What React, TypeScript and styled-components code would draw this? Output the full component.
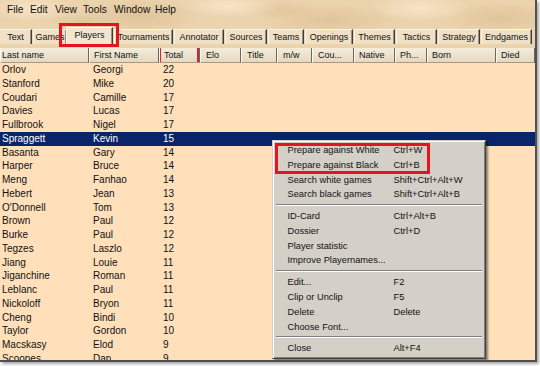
import React from 'react';
import styled, { createGlobalStyle } from 'styled-components';

const Global = createGlobalStyle`
  html, body { margin: 0; padding: 0; background: #ffffff; }
  body { width: 540px; height: 366px; overflow: hidden; font-family: "Liberation Sans", Arial, sans-serif; }
  #root { width: 540px; height: 366px; }
`;

const COLS = '89px 70px 41px 41px 36px 35px 42px 41px 32px 69px 39px';

const Window = styled.div`
  position: relative;
  box-sizing: border-box;
  width: 537px;
  height: 362px;
  border-right: 2px solid #505050;
  border-bottom: 2px solid #505050;
  box-shadow: 2px 2px 3px rgba(0, 0, 0, 0.35);
  background: #ffe0bb;
  display: flex;
  flex-direction: column;
  overflow: hidden;
`;

const TopArea = styled.div`
  height: 48px;
  flex: none;
  display: flex;
  flex-direction: column;
  background-color: #ebd3ad;
  background-image:
    radial-gradient(ellipse 40px 14px at 30px 8px, rgba(250, 232, 205, 0.8), transparent),
    radial-gradient(ellipse 60px 18px at 140px 16px, rgba(214, 182, 138, 0.55), transparent),
    radial-gradient(ellipse 50px 12px at 230px 6px, rgba(250, 232, 205, 0.8), transparent),
    radial-gradient(ellipse 70px 16px at 330px 20px, rgba(214, 182, 138, 0.5), transparent),
    radial-gradient(ellipse 50px 14px at 420px 8px, rgba(250, 232, 205, 0.75), transparent),
    radial-gradient(ellipse 60px 16px at 500px 18px, rgba(214, 182, 138, 0.5), transparent),
    radial-gradient(ellipse 30px 10px at 80px 22px, rgba(214, 182, 138, 0.45), transparent),
    radial-gradient(ellipse 40px 10px at 280px 10px, rgba(214, 182, 138, 0.4), transparent);
`;

const MenuBar = styled.div`
  height: 19px;
  display: flex;
  align-items: center;
  padding-left: 7px;
  font-size: 10.2px;
  color: #111;
`;

const MenuBarItem = styled.span<{ $w: number }>`
  width: ${p => p.$w}px;
`;

const TabStrip = styled.div`
  margin-top: 8px;
  height: 18px;
  display: flex;
  align-items: flex-start;
`;

const Tab = styled.div<{ $w: number; $active?: boolean }>`
  box-sizing: border-box;
  width: ${p => p.$w}px;
  height: ${p => (p.$active ? 18 : 15)}px;
  margin-top: ${p => (p.$active ? 0 : 2)}px;
  margin-left: ${p => (p.$active ? -1 : 1)}px;
  background: ${p => (p.$active ? '#f3e6d0' : '#efe0c6')};
  border-top: 1px solid #fbf4ea;
  border-left: 1px solid #fbf4ea;
  border-right: 1px solid #3c3c3c;
  box-shadow: inset -1px 0 0 #9a9080;
  font-size: 9px;
  color: #111;
  display: flex;
  align-items: center;
  justify-content: center;
  padding-bottom: ${p => (p.$active ? 3 : 0)}px;
  white-space: nowrap;
  z-index: ${p => (p.$active ? 2 : 1)};
  &:first-child { margin-left: 0; border-left: none; }
`;

const HeaderRow = styled.div`
  display: grid;
  grid-template-columns: ${COLS};
  height: 15px;
  flex: none;
`;

const HeaderCell = styled.div<{ $pad: number; $sorted?: boolean }>`
  position: relative;
  box-sizing: border-box;
  padding-left: ${p => p.$pad}px;
  background: linear-gradient(#f4ecdc, #e6d8bf);
  border-left: 1px solid #fffaf0;
  border-right: 1px solid #6e6658;
  border-bottom: 1px solid #a69a84;
  font-size: 9px;
  line-height: 14px;
  color: #111;
  white-space: nowrap;
  overflow: hidden;
  ${p =>
    p.$sorted
      ? `box-shadow: inset 1px 0 0 #e0202a, inset -2px 0 0 #e0202a;`
      : ''}
`;

const Body = styled.div`
  flex: 1;
  background: #ffe0bb;
`;

const Row = styled.div<{ $selected?: boolean }>`
  display: grid;
  grid-template-columns: ${COLS};
  height: 13.75px;
  align-items: center;
  background: ${p => (p.$selected ? '#0a246a' : 'transparent')};
  color: ${p => (p.$selected ? '#ffffff' : '#111')};
  font-size: 10px;
`;

const Cell = styled.div<{ $pad: number }>`
  padding-left: ${p => p.$pad}px;
  white-space: nowrap;
  line-height: 13.75px;
`;

const RedBox = styled.div<{ $l: number; $t: number; $w: number; $h: number }>`
  position: absolute;
  left: ${p => p.$l}px;
  top: ${p => p.$t}px;
  width: ${p => p.$w}px;
  height: ${p => p.$h}px;
  box-sizing: border-box;
  border: 3px solid #e3151d;
  z-index: 10;
  pointer-events: none;
`;

const Popup = styled.div`
  position: absolute;
  left: 272px;
  top: 140px;
  width: 214px;
  box-sizing: border-box;
  background: #d4d0c8;
  border-top: 1px solid #d4d0c8;
  border-left: 1px solid #d4d0c8;
  border-right: 1px solid #404040;
  border-bottom: 1px solid #404040;
  box-shadow: inset 1px 1px 0 #ffffff, inset -1px -1px 0 #808080, 2px 2px 2px rgba(0, 0, 0, 0.45);
  padding: 2px 2px 2px 2px;
  z-index: 5;
  font-size: 9.3px;
  color: #111;
`;

const MenuItem = styled.div`
  display: grid;
  grid-template-columns: 106px 1fr;
  height: 14.7px;
  align-items: center;
  padding-left: 12.5px;
  white-space: nowrap;
`;

const Separator = styled.div`
  height: 7.3px;
  display: flex;
  flex-direction: column;
  justify-content: center;
  padding: 0 1px;
  &::before { content: ''; display: block; height: 1px; background: #808080; }
  &::after { content: ''; display: block; height: 1px; background: #ffffff; }
`;

const menuBar: [string, number][] = [
  ['File', 23], ['Edit', 25], ['View', 28], ['Tools', 31], ['Window', 41], ['Help', 30],
];

const tabs: [string, number, boolean?][] = [
  ['Text', 32], ['Games', 34], ['Players', 47, true], ['Tournaments', 59], ['Annotator', 50],
  ['Sources', 42], ['Teams', 36], ['Openings', 48], ['Themes', 41], ['Tactics', 41],
  ['Strategy', 42], ['Endgames', 51],
];

const headers: [string, number, boolean?][] = [
  ['Last name', 1], ['First Name', 4], ['Total', 4, true], ['Elo', 5], ['Title', 5],
  ['m/w', 5], ['Cou...', 5], ['Native', 4], ['Ph...', 4], ['Born', 4], ['Died', 4],
];

const players: [string, string, number][] = [
  ['Orlov', 'Georgi', 22], ['Stanford', 'Mike', 20], ['Coudari', 'Camille', 17],
  ['Davies', 'Lucas', 17], ['Fullbrook', 'Nigel', 17], ['Spraggett', 'Kevin', 15],
  ['Basanta', 'Gary', 14], ['Harper', 'Bruce', 14], ['Meng', 'Fanhao', 14],
  ['Hebert', 'Jean', 13], ["O'Donnell", 'Tom', 13], ['Brown', 'Paul', 12],
  ['Burke', 'Paul', 12], ['Tegzes', 'Laszlo', 12], ['Jiang', 'Louie', 11],
  ['Jiganchine', 'Roman', 11], ['Leblanc', 'Paul', 11], ['Nickoloff', 'Bryon', 11],
  ['Cheng', 'Bindi', 10], ['Taylor', 'Gordon', 10], ['Macskasy', 'Elod', 9],
  ['Scoopes', 'Dan', 9],
];

type MenuEntry = [string, string] | 'sep';
const menu: MenuEntry[] = [
  ['Prepare against White', 'Ctrl+W'],
  ['Prepare against Black', 'Ctrl+B'],
  ['Search white games', 'Shift+Ctrl+Alt+W'],
  ['Search black games', 'Shift+Ctrl+Alt+B'],
  'sep',
  ['ID-Card', 'Ctrl+Alt+B'],
  ['Dossier', 'Ctrl+D'],
  ['Player statistic', ''],
  ['Improve Playernames...', ''],
  'sep',
  ['Edit...', 'F2'],
  ['Clip or Unclip', 'F5'],
  ['Delete', 'Delete'],
  ['Choose Font...', ''],
  'sep',
  ['Close', 'Alt+F4'],
];

export default function App() {
  return (
    <>
      <Global />
      <Window>
        <TopArea>
          <MenuBar>
            {menuBar.map(([t, w]) => (
              <MenuBarItem key={t} $w={w}>{t}</MenuBarItem>
            ))}
          </MenuBar>
          <TabStrip>
            {tabs.map(([t, w, a]) => (
              <Tab key={t} $w={w} $active={a}>{t}</Tab>
            ))}
          </TabStrip>
        </TopArea>
        <HeaderRow>
          {headers.map(([t, pad, s]) => (
            <HeaderCell key={t} $pad={pad} $sorted={s}>{t}</HeaderCell>
          ))}
        </HeaderRow>
        <Body>
          {players.map(([last, first, total]) => (
            <Row key={last} $selected={last === 'Spraggett'}>
              <Cell $pad={2}>{last}</Cell>
              <Cell $pad={4}>{first}</Cell>
              <Cell $pad={4}>{total}</Cell>
            </Row>
          ))}
        </Body>
        <RedBox $l={59} $t={23} $w={60} $h={24} />
        <Popup>
          {menu.map((m, i) =>
            m === 'sep' ? (
              <Separator key={i} />
            ) : (
              <MenuItem key={i}>
                <span>{m[0]}</span>
                <span>{m[1]}</span>
              </MenuItem>
            )
          )}
          <RedBox $l={2} $t={2} $w={155} $h={31} />
        </Popup>
      </Window>
    </>
  );
}
